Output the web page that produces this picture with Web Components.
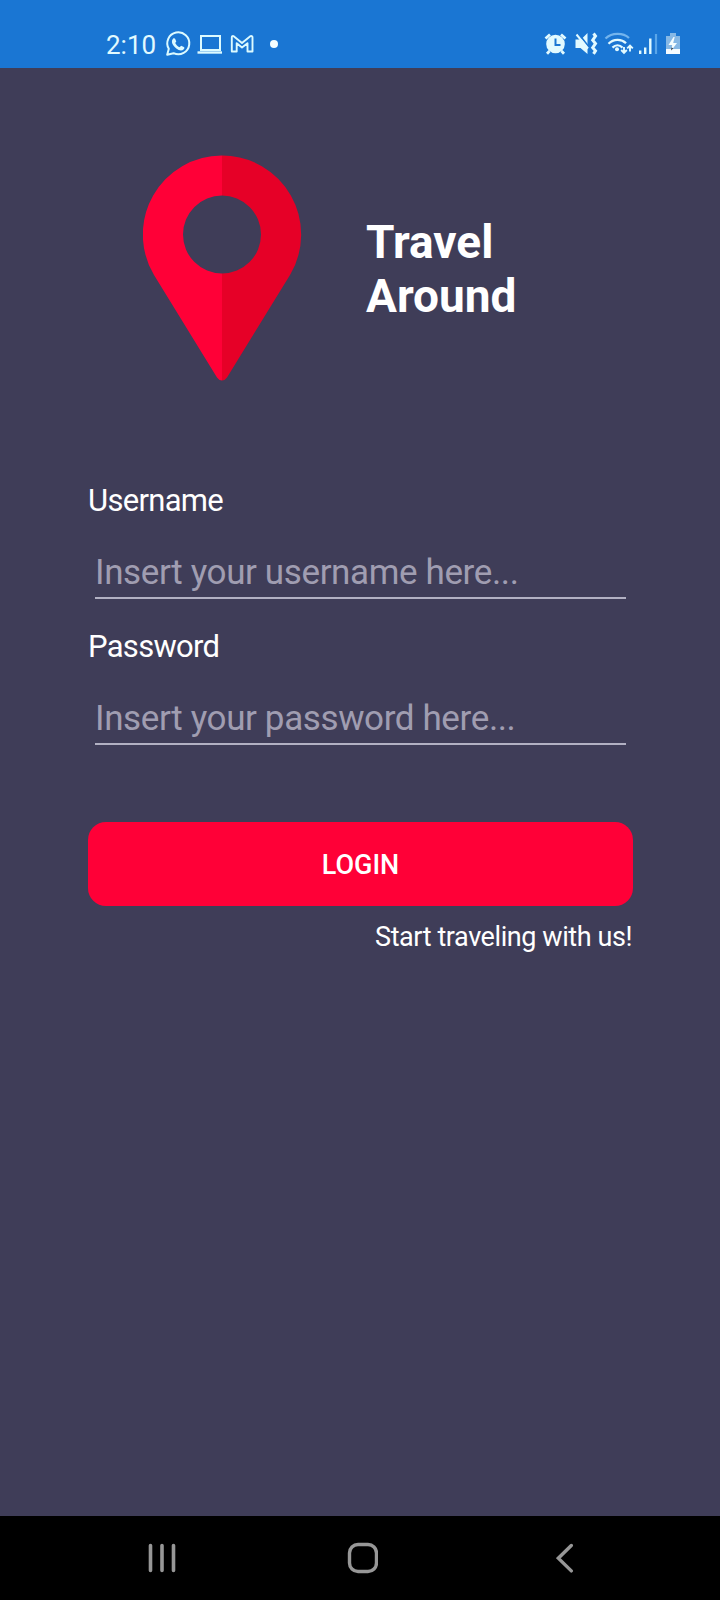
<!DOCTYPE html>
<html lang="en">
<head>
<meta charset="utf-8">
<title>Travel Around</title>
<style>
html,body{margin:0;padding:0;background:#3f3d58}
body{font-family:Roboto,"Liberation Sans",sans-serif;color:#fff}
</style>
</head>
<body>
<travel-app></travel-app>
<script>
const define = (name, html) => customElements.define(name, class extends HTMLElement {
  constructor() {
    super();
    const t = document.createElement('template');
    t.innerHTML = html;
    this.attachShadow({ mode: 'open' }).append(t.content.cloneNode(true));
  }
});

define('status-bar', `
<style>
:host{display:flex;justify-content:space-between;align-items:flex-start;box-sizing:border-box;height:68px;padding:30px 38px 0 106px;background:#1a76d3;color:#e2faff}
.side{display:flex;align-items:center;height:30px}
.time{font-size:26px;line-height:30px;width:59px}
svg{display:block;overflow:visible}
</style>
<div class="side">
  <span class="time">2:10</span>
  <svg width="114" height="30" viewBox="165 30 114 30" fill="none" stroke="#dcfaff" stroke-width="2">
    <path d="M167.2 54.8 168.8 48.8A11 11 0 1 1 173.6 53.2Z" stroke-linejoin="round"/>
    <path d="M173.2 38.6c.7-.7 1.5-.6 1.9.2l1.2 2.6-1.1 1.7c1 2 2.3 3.3 4.3 4.1l1.7-1.5 2.6 1.3c.9.5.8 1.4 0 2.2-2 1.9-4.700 1.400-7.500-.7-3.700-2.900-5.900-7-3.100-9.900z" fill="#dcfaff" stroke="none"/>
    <rect x="201" y="36" width="19" height="14"/><path d="M197.500 52.500h24.500" stroke-width="2.400"/>
    <path d="M231.800 51.500V37.500q0-1.700 1.600-1.400L242 43l8.600-6.900q1.900-.5 1.900 1.400v14h-5v-8.300L242 47.500l-5.300-4.300v8.300z" stroke-width="1.900" stroke-linejoin="round"/>
    <circle cx="274" cy="44" r="4" fill="#f4fdff" stroke="none"/>
  </svg>
</div>
<div class="side">
  <svg width="138" height="30" viewBox="544 30 138 30" fill="none" stroke="#e2faff">
    <circle cx="555.500" cy="44" r="9.300" fill="#e2faff" stroke="none"/>
    <path d="M545.500 38.500 550 34.500M561 34.500l4.500 4M549.500 51l-2.500 2.700M561.500 51l2.500 2.700" stroke-width="2.800"/>
    <path d="M555.500 38.500v6.500h5" stroke="#1a76d3" stroke-width="2"/>
    <path d="M575.500 39.500h5.500l6.500-6.500v21l-7-6h-5z" fill="#e2faff" stroke="none"/>
    <path d="M578 33 588.500 46.500" stroke="#1a76d3" stroke-width="1.800"/>
    <path d="M576.500 34.500 588 48.500" stroke-width="2"/>
    <path d="m593.500 33.500 2 2.600-2.800 4 2.800 3.500-2.800 4 2.800 3.300-2 3" stroke-width="3"/>
    <path d="M605.500 38.500C612 32.500 623 32.500 629 38" stroke="#73b4ed" stroke-width="2.300"/>
    <path d="M608.500 43.700c5-5 13-5 17.500-.5M612.500 47.600c3-3 7-3 10 0" stroke-width="2.300"/>
    <circle cx="617" cy="49.300" r="2" fill="#e2faff" stroke="none"/>
    <path d="M624 47v5.500M621.200 50l2.800 2.800 2.800-2.800M630 51.500v-5.500M627.200 48.300l2.800-2.800 2.800 2.800" stroke-width="1.900"/>
    <path d="M640.200 54v-3.500M645.200 54v-6.500M650.300 54V38.500" stroke-width="2.400"/>
    <path d="M656 54V34" stroke="#5aa6e9" stroke-width="2.200"/>
    <path d="M666 36h4v-3h6v3h4v18h-14z" fill="#86b8e5" stroke="none"/>
    <path d="M666 49h14v5h-14z" fill="#f5fbff" stroke="none"/>
    <path d="m673.500 37-5 8h3.700L671 51l6-8h-3.800l1.500-6z" fill="#f5fdff" stroke="none"/>
    <path d="m671.300 47.500-.2 3 2.300-2.300z" fill="#3b4550" stroke="none"/>
  </svg>
</div>`);

define('brand-header', `
<style>
:host{display:flex;align-items:flex-start;padding:87px 0 0 143px}
svg{display:block}
h1{margin:60px 0 0 63px;width:180px;font-size:46px;line-height:54px;font-weight:700}
</style>
<svg width="160" height="228" viewBox="143 155 160 228">
  <path fill="#ff0037" d="M222 155.500A79 79 0 0 0 154 275L217 377.500Q219 380.500 222 380.500V273.500A39 39 0 0 1 222 195.500Z"/>
  <path fill="#e60027" d="M222 155.500A79 79 0 0 1 290 275L227 377.500Q225 380.500 222 380.500V273.500A39 39 0 0 0 222 195.500Z"/>
</svg>
<h1><slot></slot></h1>`);

define('text-field', `
<style>
:host{display:block;height:146px}
.label{display:block;font-size:31px;line-height:37px;letter-spacing:-.7px}
.box{display:block;margin:33px 7px 0;height:45px;border-bottom:2px solid #b2b1c3;font-size:35px;line-height:41px;letter-spacing:-.38px;color:#a09db1;white-space:nowrap}
</style>
<span class="label"><slot name="label"></slot></span>
<span class="box"><slot></slot></span>`);

define('login-button', `
<style>
:host{display:block}
button{display:block;width:100%;height:84px;margin:0;padding:2px 0 0;border:0;border-radius:18px;background:#ff0037;color:#fff;font:500 27px/82px Roboto,"Liberation Sans",sans-serif}
</style>
<button type="button"><slot></slot></button>`);

define('nav-bar', `
<style>
:host{display:flex;align-items:center;box-sizing:border-box;height:84px;padding:0 146px 0 148px;background:#000}
svg{display:block}
.home{margin:0 auto 0 170px}
</style>
<svg width="29" height="30" viewBox="148 1543 29 30" stroke="#979797" stroke-width="3.600" stroke-linecap="round"><path d="M150.500 1545.500v25M162 1545.500v25M173.500 1545.500v25"/></svg>
<svg class="home" width="31" height="32" viewBox="347 1542 31 32" fill="none" stroke="#979797" stroke-width="3.400"><rect x="349.500" y="1544.500" width="27" height="27" rx="8.500"/></svg>
<svg width="18" height="30" viewBox="556 1543 18 30" fill="none" stroke="#979797" stroke-width="3.400" stroke-linecap="round"><path d="m571.300 1545.500-13 12.700 13 12.700"/></svg>`);

define('travel-app', `
<style>
:host{display:flex;flex-direction:column;width:720px;height:1600px;background:#3f3d58;overflow:hidden}
brand-header{height:328px;box-sizing:border-box}
main{flex:1;padding:86px 87px 0 88px}
login-button{margin-top:48px}
.tag{margin:15px 1px 0 0;text-align:right;font-size:27px;line-height:32px;letter-spacing:-.42px}
</style>
<status-bar></status-bar>
<brand-header>Travel Around</brand-header>
<main>
  <text-field><span slot="label">Username</span>Insert your username here...</text-field>
  <text-field><span slot="label">Password</span>Insert your password here...</text-field>
  <login-button>LOGIN</login-button>
  <p class="tag">Start traveling with us!</p>
</main>
<nav-bar></nav-bar>`);
</script>
</body>
</html>
